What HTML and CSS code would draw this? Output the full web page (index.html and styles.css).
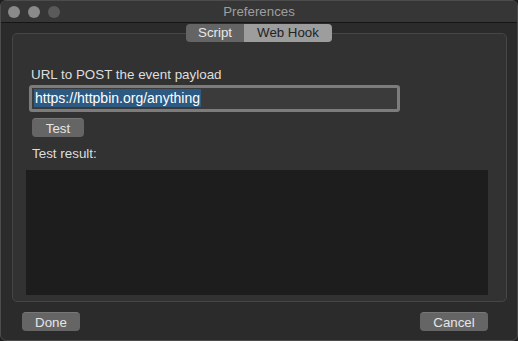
FILE: index.html
```html
<!DOCTYPE html>
<html>
<head>
	<title>Preferences</title>
	<link rel="stylesheet" href="styles.css">
</head>
<body>
	<div class="window">
		<div class="titlebar">
			<div class="lights">
				<span class="light"></span>
				<span class="light"></span>
				<span class="light off"></span>
			</div>
			<div class="title">Preferences</div>
			<div></div>
		</div>

		<div class="tabs">
			<div class="segment">
				<span class="tab">Script</span>
				<span class="tab active">Web Hook</span>
			</div>
		</div>

		<div class="box">
			<div class="label">URL to POST the event payload</div>
			<div class="field"><span class="selected">https://httpbin.org/anything</span></div>
			<button type="button" class="btn test">Test</button>
			<div class="label result-label">Test result:</div>
			<div class="result"></div>
		</div>

		<div class="footer">
			<button type="button" class="btn done">Done</button>
			<button type="button" class="btn cancel">Cancel</button>
		</div>
	</div>
</body>
</html>
```

FILE: styles.css
```css
body{
	margin: 0;
	background: #1e1e1e;
	font-family: "Liberation Sans", Arial, sans-serif;
	font-size: 13px;
}
.window{
	width: 518px;
	height: 341px;
	box-sizing: border-box;
	border: 1px solid #4c4c4c;
	border-radius: 6px;
	background: #2b2b2b;
	overflow: hidden;
	display: flex;
	flex-direction: column;
}
.titlebar{
	height: 21px;
	background: #363636;
	border-bottom: 1px solid #151515;
	display: grid;
	grid-template-columns: 1fr auto 1fr;
	align-items: center;
}
.lights{
	display: flex;
	gap: 8px;
	padding-left: 7px;
}
.light{
	width: 12px;
	height: 12px;
	border-radius: 50%;
	background: #8a8a8a;
}
.light.off{
	background: #5a5a5a;
}
.title{
	color: #9e9e9e;
	font-size: 13.3px;
}
.tabs{
	position: relative;
	z-index: 1;
	display: flex;
	justify-content: center;
	margin-top: 1px;
}
.segment{
	display: flex;
	height: 18px;
	border-radius: 4px;
	overflow: hidden;
}
.tab{
	padding: 0 12px;
	line-height: 18px;
	font-size: 13.3px;
	background: #646464;
	color: #e8e8e8;
}
.tab.active{
	padding: 0 13px;
	background: #9d9d9d;
	color: #232323;
}
.box{
	margin: -9px 10px 0 11px;
	height: 269px;
	box-sizing: border-box;
	border: 1px solid #464646;
	border-radius: 5px;
	background: #323232;
	padding: 33px 0 0 13px;
	display: flex;
	flex-direction: column;
	align-items: flex-start;
}
.label{
	color: #dedede;
	font-size: 13.4px;
	line-height: 16px;
	margin-left: 5px;
}
.field{
	margin: 2px 0 0 3px;
	width: 371px;
	height: 27px;
	box-sizing: border-box;
	border: 3px solid #7c7c7c;
	border-radius: 3px;
	background: #3b3b3b;
	padding: 1px 0 0 2px;
	font-size: 14px;
}
.selected{
	display: inline-block;
	line-height: 18px;
	padding: 0 1px;
	background: #2d5a82;
	color: #ffffff;
}
.btn{
	font-family: "Liberation Sans", Arial, sans-serif;
	font-size: 13.3px;
	color: #e6e6e6;
	background: #656565;
	border: none;
	border-top: 1px solid #777777;
	border-radius: 4px;
	height: 19px;
	padding: 0;
	line-height: 17px;
}
.test{
	width: 52px;
	margin: 6px 0 0 6px;
}
.result-label{
	margin-top: 9px;
	margin-left: 6px;
}
.result{
	width: 462px;
	height: 125px;
	margin-top: 8px;
	background: #1d1d1d;
}
.footer{
	display: flex;
	justify-content: space-between;
	padding: 10px 29px 0 21px;
}
.done{
	width: 58px;
}
.cancel{
	width: 68px;
}
```
